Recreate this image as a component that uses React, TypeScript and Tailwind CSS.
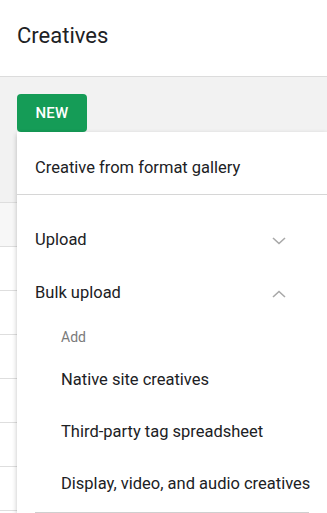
import React from "react";

function Chevron({ up }: { up?: boolean }) {
  return (
    <svg width="14" height="8" viewBox="0 0 14 8" className="shrink-0">
      <path
        d={up ? "M1 7 L7 1.5 L13 7" : "M1 1 L7 6.5 L13 1"}
        fill="none"
        stroke="#a8a8a8"
        strokeWidth="1.6"
      />
    </svg>
  );
}

export default function App() {
  const rows = [0, 1, 2, 3, 4, 5, 6, 7];
  return (
    <div
      className="relative w-[327px] h-[513px] overflow-hidden bg-white text-[#202124]"
      style={{ fontFamily: "Roboto, 'Noto Sans', sans-serif" }}
    >
      <div className="h-[77px] flex items-center pl-[17px] border-b border-[#dcdcdc] pb-[4px]">
        <h1 className="text-[22px] leading-none font-normal">Creatives</h1>
      </div>
      <div className="h-[125px] bg-[#f2f2f2] pt-[17px] pl-[17px]">
        <button className="w-[70px] h-[38px] rounded-[4px] bg-[#159c57] text-white text-[15px] font-medium tracking-[0.2px] flex items-center justify-center">
          NEW
        </button>
      </div>
      <div className="flex flex-col">
        {rows.map((r) => (
          <div
            key={r}
            className={`h-[44px] border-t border-[#dedede] ${r === 0 ? "bg-[#f7f7f7]" : "bg-white"}`}
          />
        ))}
      </div>

      <div className="absolute left-[17px] top-[132px] right-0 bottom-0 bg-white shadow-[0_2px_5px_rgba(0,0,0,0.24)] flex flex-col">
        <div className="h-[62px] pt-[10px] flex items-center pl-[18px] text-[16.5px]">
          Creative from format gallery
        </div>
        <div className="h-px bg-[#d6d6d6]" />
        <div className="h-[19px]" />
        <div className="h-[53px] flex items-center justify-between pl-[18px] pr-[41px] text-[16.5px]">
          <span>Upload</span>
          <Chevron />
        </div>
        <div className="h-[53px] flex items-center justify-between pl-[18px] pr-[41px] text-[16.5px]">
          <span>Bulk upload</span>
          <Chevron up />
        </div>
        <div className="h-[34px] flex items-center pl-[44px] text-[14px] text-[#7a7a7a]">
          Add
        </div>
        <div className="h-[52px] flex items-center pl-[44px] text-[16.5px]">
          Native site creatives
        </div>
        <div className="h-[52px] flex items-center pl-[44px] text-[16.5px]">
          Third-party tag spreadsheet
        </div>
        <div className="h-[53px] flex items-center pl-[44px] text-[16.5px]">
          Display, video, and audio creatives
        </div>
        <div className="mt-[1px] mx-[18px] h-px bg-[#cfcfcf]" />
      </div>
    </div>
  );
}
